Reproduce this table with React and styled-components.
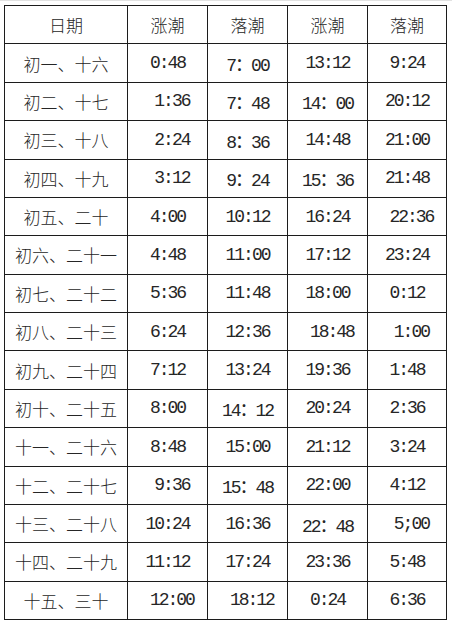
import styled, { createGlobalStyle } from 'styled-components';

const GlobalStyle = createGlobalStyle`
  html, body {
    margin: 0;
    padding: 0;
    background: #fff;
  }
  body {
    border-top: 1px solid #e2e2e2;
  }
`;

const Page = styled.div`
  padding: 4px 0 0 4px;
`;

const Grid = styled.div`
  display: grid;
  grid-template-columns: 123px 80px 80px 80px 79px;
  grid-template-rows: repeat(16, 1fr);
  width: 443px;
  height: 615px;
  box-sizing: border-box;
  border-left: 1px solid #1c1c1c;
  border-top: 1px solid #1c1c1c;
`;

const Cell = styled.div`
  display: flex;
  align-items: center;
  justify-content: center;
  border-right: 1px solid #1c1c1c;
  border-bottom: 1px solid #1c1c1c;
  white-space: pre;
  color: #262626;
  font-family: ${p => (p.$cjk ? '"Noto Sans CJK SC", sans-serif' : '"Liberation Mono", "Noto Sans CJK SC", monospace')};
  font-size: ${p => (p.$cjk ? '17px' : '18px')};
  font-weight: ${p => (p.$cjk ? 300 : 400)};
  letter-spacing: ${p => (p.$cjk ? '0' : '-2px')};
`;

const header = ['日期', '涨潮', '落潮', '涨潮', '落潮'];

const rows = [
  ['初一、十六', '0:48', '7：00', '13:12', '9:24'],
  ['初二、十七', ' 1:36', '7：48', '14：00', '20:12'],
  ['初三、十八', ' 2:24', '8：36', '14:48', '21:00'],
  ['初四、十九', ' 3:12', '9：24', '15：36', '21:48'],
  ['初五、二十', '4:00', '10:12', '16:24', ' 22:36'],
  ['初六、二十一', '4:48', '11:00', '17:12', '23:24'],
  ['初七、二十二', '5:36', '11:48', '18:00', '0:12'],
  ['初八、二十三', '6:24', '12:36', ' 18:48', ' 1:00'],
  ['初九、二十四', '7:12', '13:24', '19:36', '1:48'],
  ['初十、二十五', '8:00', '14：12', '20:24', '2:36'],
  ['十一、二十六', '8:48', '15:00', '21:12', '3:24'],
  ['十二、二十七', ' 9:36', '15：48', '22:00', '4:12'],
  ['十三、二十八', '10:24', '16:36', '22：48', ' 5;00'],
  ['十四、二十九', '11:12', '17:24', '23:36', '5:48'],
  ['十五、三十', ' 12:00', ' 18:12', '0:24', '6:36'],
];

export default function App() {
  return (
    <Page>
      <GlobalStyle />
      <Grid>
        {header.map((h, i) => (
          <Cell key={'h' + i} $cjk>{h}</Cell>
        ))}
        {rows.map((r, ri) =>
          r.map((v, ci) => (
            <Cell key={ri + '-' + ci} $cjk={ci === 0}>{v}</Cell>
          ))
        )}
      </Grid>
    </Page>
  );
}
